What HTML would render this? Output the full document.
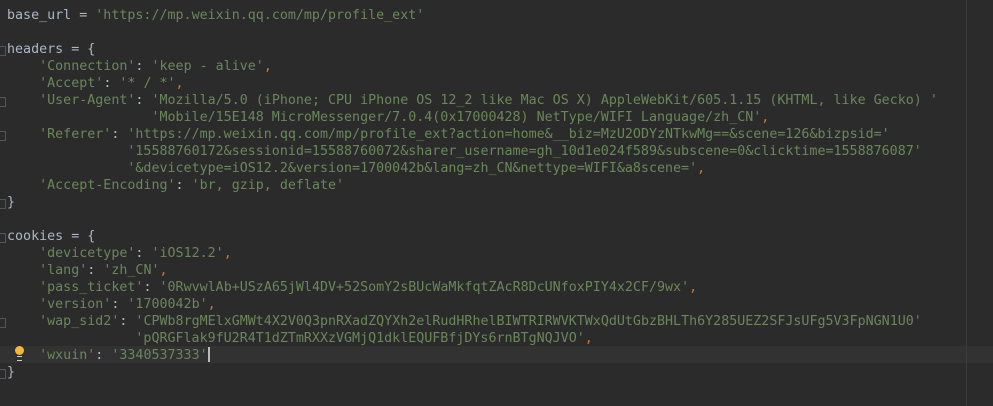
<!DOCTYPE html>
<html><head><meta charset="utf-8"><style>
html,body{margin:0;padding:0;background:#2b2b2b;width:993px;height:406px;overflow:hidden}
.ed{position:absolute;left:0;top:0;width:993px;height:406px}
pre{margin:0;position:absolute;left:7px;top:7px;font-family:"DejaVu Sans Mono","Liberation Mono",monospace;font-size:13.33px;line-height:17px;color:#a9b7c6}
.s{color:#6a8759}.p{color:#cc7832}
.cur{position:absolute;left:0;top:346px;width:993px;height:17px;background:#323232}
.mg{position:absolute;left:966px;top:0;width:1px;height:406px;background:#3c3c3c}
.bulb{position:absolute;left:15px;top:346px;width:9px;height:9px;border-radius:50%;background:#f3b83a}
.bulb:after{content:"";position:absolute;left:2px;top:10px;width:5px;height:3px;border-top:1px solid #ccc;border-bottom:1px solid #ccc}
.caret{display:inline-block;width:2px;height:15px;background:#bbb;vertical-align:-3px}
.f{position:absolute;left:0;width:5px;height:8px;border:1px solid #555;border-left:none}
</style></head><body><div class="ed">
<div class="cur"></div><div class="mg"></div>
<div class="f" style="top:46px"></div><div class="f" style="top:97px"></div><div class="f" style="top:131px"></div><div class="f" style="top:199px"></div><div class="f" style="top:233px"></div><div class="f" style="top:318px"></div><div class="f" style="top:369px"></div>
<div class="bulb"></div>
<pre>base_url = <span class="s">'https://mp.weixin.qq.com/mp/profile_ext'</span>

headers = {
    <span class="s">'Connection'</span>: <span class="s">'keep - alive'</span><span class="p">,</span>
    <span class="s">'Accept'</span>: <span class="s">'* / *'</span><span class="p">,</span>
    <span class="s">'User-Agent'</span>: <span class="s">'Mozilla/5.0 (iPhone; CPU iPhone OS 12_2 like Mac OS X) AppleWebKit/605.1.15 (KHTML, like Gecko) '</span>
                  <span class="s">'Mobile/15E148 MicroMessenger/7.0.4(0x17000428) NetType/WIFI Language/zh_CN'</span><span class="p">,</span>
    <span class="s">'Referer'</span>: <span class="s">'https://mp.weixin.qq.com/mp/profile_ext?action=home&amp;__biz=MzU2ODYzNTkwMg==&amp;scene=126&amp;bizpsid='</span>
               <span class="s">'15588760172&amp;sessionid=15588760072&amp;sharer_username=gh_10d1e024f589&amp;subscene=0&amp;clicktime=1558876087'</span>
               <span class="s">'&amp;devicetype=iOS12.2&amp;version=1700042b&amp;lang=zh_CN&amp;nettype=WIFI&amp;a8scene='</span><span class="p">,</span>
    <span class="s">'Accept-Encoding'</span>: <span class="s">'br, gzip, deflate'</span>
}

cookies = {
    <span class="s">'devicetype'</span>: <span class="s">'iOS12.2'</span><span class="p">,</span>
    <span class="s">'lang'</span>: <span class="s">'zh_CN'</span><span class="p">,</span>
    <span class="s">'pass_ticket'</span>: <span class="s">'0RwvwlAb+USzA65jWl4DV+52SomY2sBUcWaMkfqtZAcR8DcUNfoxPIY4x2CF/9wx'</span><span class="p">,</span>
    <span class="s">'version'</span>: <span class="s">'1700042b'</span><span class="p">,</span>
    <span class="s">'wap_sid2'</span>: <span class="s">'CPWb8rgMElxGMWt4X2V0Q3pnRXadZQYXh2elRudHRhelBIWTRIRWVKTWxQdUtGbzBHLTh6Y285UEZ2SFJsUFg5V3FpNGN1U0'</span>
                <span class="s">'pQRGFlak9fU2R4T1dZTmRXXzVGMjQ1dklEQUFBfjDYs6rnBTgNQJVO'</span><span class="p">,</span>
    <span class="s">'wxuin'</span>: <span class="s">'3340537333'</span><span class="caret"></span>
}</pre>
</div></body></html>
